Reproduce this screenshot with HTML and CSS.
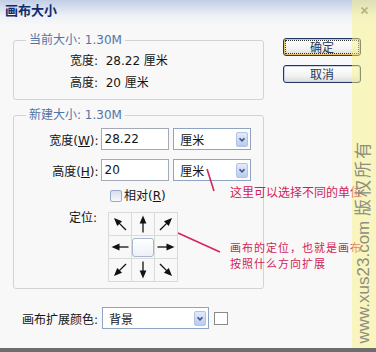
FILE: index.html
```html
<!DOCTYPE html>
<html lang="zh-CN">
<head>
  <meta charset="UTF-8" />
  <title>画布大小</title>
  <link rel="stylesheet" href="styles.css">
</head>
<body>
  <svg class="defs" aria-hidden="true">
    <symbol id="arrow" viewBox="0 0 22 22">
      <path d="M11 2.5 L14.4 10.5 L7.6 10.5 Z" />
      <rect x="10.35" y="9" width="1.3" height="10.5" />
    </symbol>
    <symbol id="chev" viewBox="0 0 12 15">
      <path d="M3 6 L6 9 L9 6" fill="none" stroke="#3f5584" stroke-width="2" />
    </symbol>
  </svg>

  <div class="dialog">
    <div class="titlebar">
      <span class="title">画布大小</span>
      <svg class="close" width="7" height="7" viewBox="0 0 7 7">
        <path d="M0.5 0.5 L6.5 6.5 M6.5 0.5 L0.5 6.5" stroke="#7c7c7c" stroke-width="1.8" />
      </svg>
    </div>

    <div class="main">
      <div class="left">
        <fieldset class="group current">
          <legend>当前大小: 1.30M</legend>
          <div class="info">宽度:&nbsp; 28.22 厘米</div>
          <div class="info">高度:&nbsp; 20 厘米</div>
        </fieldset>

        <fieldset class="group new">
          <legend>新建大小: 1.30M</legend>
          <div class="field">
            <span class="lbl">宽度(<u>W</u>):</span>
            <div class="input">28.22</div>
            <div class="select unit">
              <span>厘米</span>
              <span class="drop"><svg><use href="#chev" /></svg></span>
            </div>
          </div>
          <div class="field">
            <span class="lbl">高度(<u>H</u>):</span>
            <div class="input">20</div>
            <div class="select unit">
              <span>厘米</span>
              <span class="drop"><svg><use href="#chev" /></svg></span>
            </div>
          </div>
          <div class="check-row">
            <span class="checkbox"></span>
            <span>相对(<u>R</u>)</span>
          </div>
          <div class="anchor-row">
            <span class="lbl">定位:</span>
            <div class="anchor">
              <div class="cell"><svg class="arr nw"><use href="#arrow" /></svg></div>
              <div class="cell"><svg class="arr n"><use href="#arrow" /></svg></div>
              <div class="cell"><svg class="arr ne"><use href="#arrow" /></svg></div>
              <div class="cell"><svg class="arr w"><use href="#arrow" /></svg></div>
              <div class="cell"><span class="box"></span></div>
              <div class="cell"><svg class="arr e"><use href="#arrow" /></svg></div>
              <div class="cell"><svg class="arr sw"><use href="#arrow" /></svg></div>
              <div class="cell"><svg class="arr s"><use href="#arrow" /></svg></div>
              <div class="cell"><svg class="arr se"><use href="#arrow" /></svg></div>
            </div>
          </div>
        </fieldset>

        <div class="fill-row">
          <span>画布扩展颜色:</span>
          <div class="select wide">
            <span>背景</span>
            <span class="drop"><svg><use href="#chev" /></svg></span>
          </div>
          <span class="swatch"></span>
        </div>
      </div>

      <div class="buttons">
        <button class="btn default"><span>确定</span></button>
        <button class="btn">取消</button>
      </div>
    </div>

    <div class="bottombar"></div>

    <!-- annotations -->
    <svg class="notes" viewBox="0 0 376 352">
      <line x1="207" y1="169" x2="214" y2="191" />
      <line x1="178" y1="233" x2="220" y2="252" />
    </svg>
    <p class="note note-unit">这里可以选择不同的单位</p>
    <p class="note note-anchor">画布的定位，也就是画布<br>按照什么方向扩展</p>

    <div class="watermark">
      <span class="wm-text">www.xus23.com <span class="wm-cjk">版权所有</span></span>
    </div>
  </div>
</body>
</html>
```

FILE: styles.css
```css
* {
  box-sizing: border-box;
}

body {
  margin: 0;
  font-family: "DejaVu Sans", "Noto Sans CJK SC", sans-serif;
  font-size: 12px;
  color: #151515;
}

.defs {
  position: absolute;
  width: 0;
  height: 0;
}

.dialog {
  position: relative;
  width: 376px;
  height: 352px;
  overflow: hidden;
  display: flex;
  flex-direction: column;
  background: linear-gradient(#c2cee5, #eef1f6 16px, #f8f8f8 26px);
}

.titlebar {
  height: 20px;
  display: flex;
  align-items: center;
  padding: 0 8px 0 5px;
}

.title {
  font-family: "Noto Sans CJK SC", sans-serif;
  font-weight: bold;
  font-size: 13px;
  line-height: 20px;
  color: #102c6c;
}

.close {
  margin-left: auto;
}

.main {
  display: flex;
  flex: 1;
}

.left {
  width: 251px;
  margin-left: 13px;
  padding-top: 13px;
}

/* group boxes */
.group {
  margin: 0;
  min-width: 0;
  border: 1px solid #d3d3d3;
  border-radius: 3px;
  padding: 3px 12px 5px;
}

.group legend {
  padding: 0 3px;
  line-height: 14px;
  color: #5473a5;
}

.group.new {
  margin-top: 8px;
  padding: 6px 12px 6px;
}

.info {
  padding-left: 44px;
  line-height: 22px;
}

.field {
  display: flex;
  align-items: center;
  height: 22px;
}

.field + .field {
  margin-top: 9px;
}

.lbl {
  width: 74px;
  text-align: right;
}

.input {
  width: 70px;
  height: 22px;
  margin-left: 2px;
  padding-left: 3px;
  line-height: 20px;
  border: 1px solid #a3abb8;
  background: #fff;
}

.select {
  display: flex;
  align-items: center;
  height: 22px;
  padding-left: 6px;
  border: 1px solid #8fa3c3;
  background: #fff;
  font-family: "Noto Sans CJK SC", sans-serif;
}

.select.unit {
  width: 79px;
  margin-left: 4px;
}

.select.wide {
  width: 107px;
  margin-left: 4px;
}

.drop {
  margin-left: auto;
  margin-right: 2px;
  width: 12px;
  height: 15px;
  border: 1px solid #b3c3e4;
  border-radius: 2px;
  background: linear-gradient(#e3eafb, #b9cbef);
  display: flex;
}

.drop svg {
  width: 10px;
  height: 13px;
}

.check-row {
  display: flex;
  align-items: center;
  gap: 2px;
  height: 12px;
  margin: 9px 0 0 84px;
  line-height: 12px;
}

.checkbox {
  width: 12px;
  height: 12px;
  border: 1px solid #9aabc8;
  border-radius: 2px;
  background: linear-gradient(#d6deec, #f6f8fb);
}

.anchor-row {
  display: flex;
  margin-top: 10px;
}

.anchor-row .lbl {
  padding-right: 3px;
  line-height: 12px;
}

.anchor {
  margin-left: 8px;
  display: grid;
  grid-template-columns: repeat(3, 22px);
  grid-auto-rows: 22px;
  gap: 1px;
  padding: 1px;
  background: #dadada;
}

.cell {
  display: flex;
  align-items: center;
  justify-content: center;
  background: #f8f8f8;
}

.box {
  width: 22px;
  height: 19px;
  border: 1px solid #a9b6cc;
  border-radius: 3px;
  background: linear-gradient(#fff, #edf1f8);
}

.arr {
  width: 22px;
  height: 22px;
  fill: #111;
}

.arr.nw { transform: rotate(-45deg); }
.arr.ne { transform: rotate(45deg); }
.arr.w { transform: rotate(-90deg); }
.arr.e { transform: rotate(90deg); }
.arr.sw { transform: rotate(-135deg); }
.arr.s { transform: rotate(180deg); }
.arr.se { transform: rotate(135deg); }

.fill-row {
  display: flex;
  align-items: center;
  height: 22px;
  margin-top: 18px;
  padding-left: 9px;
}

.swatch {
  width: 14px;
  height: 13px;
  margin-left: 5px;
  border: 1px solid #8a8a8a;
  background: #fff;
}

/* buttons */
.buttons {
  display: flex;
  flex-direction: column;
  gap: 9px;
  margin-left: 19px;
  padding-top: 18px;
}

.btn {
  display: block;
  width: 78px;
  height: 18px;
  padding: 0;
  border: 1px solid #213766;
  border-radius: 3px;
  background: linear-gradient(#fff, #f3f3f1 60%, #d9dbe3);
  box-shadow: inset 0 0 0 1px #c8d3ea;
  font-family: "Noto Sans CJK SC", sans-serif;
  font-size: 12px;
  line-height: 16px;
  color: #2b3556;
}

.btn.default {
  box-shadow: inset 0 0 0 1px #e6c46a;
}

.btn.default span {
  display: block;
  margin: 1px;
  border: 1px dotted #333;
  line-height: 12px;
}

.bottombar {
  height: 4px;
  background: #6d6d6d;
}

/* annotations */
.notes {
  position: absolute;
  left: 0;
  top: 0;
  width: 376px;
  height: 352px;
  stroke: #d6245c;
  stroke-width: 1.6;
}

.note {
  position: absolute;
  left: 230px;
  margin: 0;
  font-family: "Noto Sans CJK SC", sans-serif;
  font-size: 12px;
  white-space: nowrap;
  color: #d21c58;
}

.note-unit {
  top: 185px;
  line-height: 14px;
}

.note-anchor {
  top: 239px;
  font-size: 11px;
  letter-spacing: 1px;
  line-height: 16px;
}

.watermark {
  position: absolute;
  left: 352px;
  top: 0;
  width: 24px;
  height: 348px;
  background: rgba(250, 242, 130, 0.48);
}

.wm-text {
  display: block;
  margin-top: 140px;
  writing-mode: vertical-rl;
  text-orientation: sideways;
  transform: rotate(180deg);
  font-family: "Liberation Sans", "Noto Sans CJK SC", sans-serif;
  font-size: 17px;
  line-height: 24px;
  color: #8d8d80;
}

.wm-cjk {
  letter-spacing: 2px;
}
```
